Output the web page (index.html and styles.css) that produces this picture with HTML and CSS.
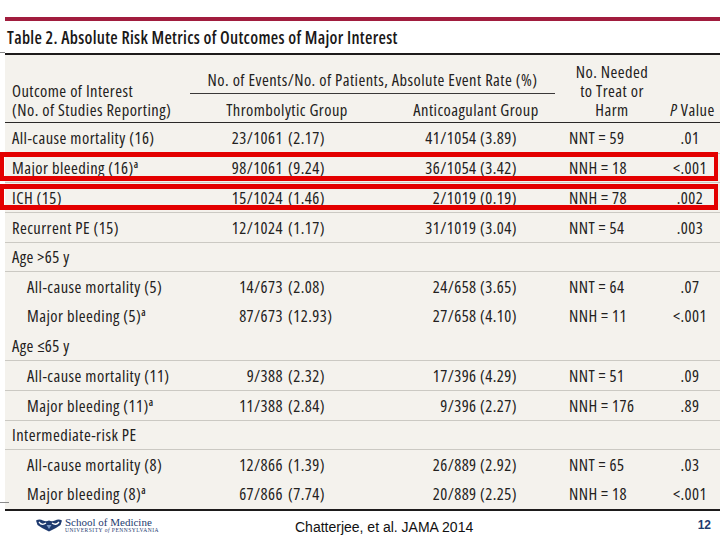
FILE: index.html
```html
<!DOCTYPE html>
<html lang="en">
<head>
<meta charset="utf-8">
<title>Table 2. Absolute Risk Metrics</title>
<link rel="stylesheet" href="styles.css">
</head>
<body>
<div class="slide">
  <div class="topbar"></div>
  <h1 class="title">Table 2. Absolute Risk Metrics of Outcomes of Major Interest</h1>
  <div class="table">
    <div class="thead">
      <div class="h-outcome">Outcome of Interest<br>(No. of Studies Reporting)</div>
      <div class="h-group">No. of Events/No. of Patients, Absolute Event Rate (%)</div>
      <div class="h-thromb">Thrombolytic Group</div>
      <div class="h-anti">Anticoagulant Group</div>
      <div class="h-nnt">No. Needed<br>to Treat or<br>Harm</div>
      <div class="h-p"><i>P</i> Value</div>
    </div>

    <div class="row">
      <div class="c-out">All-cause mortality (16)</div>
      <div class="c-thr"><span class="num">23/1061</span><span class="rate">(2.17)</span></div>
      <div class="c-ant">41/1054 (3.89)</div>
      <div class="c-nnt">NNT = 59</div>
      <div class="c-p">.01</div>
    </div>
    <div class="row ruled">
      <div class="c-out">Major bleeding (16)<sup>a</sup></div>
      <div class="c-thr"><span class="num">98/1061</span><span class="rate">(9.24)</span></div>
      <div class="c-ant">36/1054 (3.42)</div>
      <div class="c-nnt">NNH = 18</div>
      <div class="c-p">&lt;.001</div>
    </div>
    <div class="row ruled">
      <div class="c-out">ICH (15)</div>
      <div class="c-thr"><span class="num">15/1024</span><span class="rate">(1.46)</span></div>
      <div class="c-ant">2/1019 (0.19)</div>
      <div class="c-nnt">NNH = 78</div>
      <div class="c-p">.002</div>
    </div>
    <div class="row ruled">
      <div class="c-out">Recurrent PE (15)</div>
      <div class="c-thr"><span class="num">12/1024</span><span class="rate">(1.17)</span></div>
      <div class="c-ant">31/1019 (3.04)</div>
      <div class="c-nnt">NNT = 54</div>
      <div class="c-p">.003</div>
    </div>
    <div class="row ruled">
      <div class="c-out">Age &gt;65 y</div>
    </div>
    <div class="row ruled">
      <div class="c-out sub">All-cause mortality (5)</div>
      <div class="c-thr"><span class="num">14/673</span><span class="rate">(2.08)</span></div>
      <div class="c-ant">24/658 (3.65)</div>
      <div class="c-nnt">NNT = 64</div>
      <div class="c-p">.07</div>
    </div>
    <div class="row">
      <div class="c-out sub">Major bleeding (5)<sup>a</sup></div>
      <div class="c-thr"><span class="num">87/673</span><span class="rate">(12.93)</span></div>
      <div class="c-ant">27/658 (4.10)</div>
      <div class="c-nnt">NNH = 11</div>
      <div class="c-p">&lt;.001</div>
    </div>
    <div class="row">
      <div class="c-out">Age &le;65 y</div>
    </div>
    <div class="row ruled">
      <div class="c-out sub">All-cause mortality (11)</div>
      <div class="c-thr"><span class="num">9/388</span><span class="rate">(2.32)</span></div>
      <div class="c-ant">17/396 (4.29)</div>
      <div class="c-nnt">NNT = 51</div>
      <div class="c-p">.09</div>
    </div>
    <div class="row ruled">
      <div class="c-out sub">Major bleeding (11)<sup>a</sup></div>
      <div class="c-thr"><span class="num">11/388</span><span class="rate">(2.84)</span></div>
      <div class="c-ant">9/396 (2.27)</div>
      <div class="c-nnt">NNH = 176</div>
      <div class="c-p">.89</div>
    </div>
    <div class="row ruled">
      <div class="c-out">Intermediate-risk PE</div>
    </div>
    <div class="row ruled">
      <div class="c-out sub">All-cause mortality (8)</div>
      <div class="c-thr"><span class="num">12/866</span><span class="rate">(1.39)</span></div>
      <div class="c-ant">26/889 (2.92)</div>
      <div class="c-nnt">NNT = 65</div>
      <div class="c-p">.03</div>
    </div>
    <div class="row">
      <div class="c-out sub">Major bleeding (8)<sup>a</sup></div>
      <div class="c-thr"><span class="num">67/866</span><span class="rate">(7.74)</span></div>
      <div class="c-ant">20/889 (2.25)</div>
      <div class="c-nnt">NNH = 18</div>
      <div class="c-p">&lt;.001</div>
    </div>
  </div>

  <div class="highlight hl-1"></div>
  <div class="highlight hl-2"></div>
  <div class="tick tick-top"></div>
  <div class="tick tick-bottom"></div>

  <footer class="footer">
    <div class="logo">
      <svg class="shield" width="26" height="13" viewBox="0 0 26 13" aria-hidden="true">
        <path d="M0 1.5 Q3.5 -0.5 7 1.5 Q10 3 13 1.5 Q16 3 19 1.5 Q22.5 -0.5 26 1.5 L24.5 6 Q20 9.5 13 12.5 Q6 9.5 1.5 6 Z" fill="#1e3a6f"/>
        <path d="M3 3 Q6 7 10 4" stroke="#fff" stroke-width="1.3" fill="none"/>
        <path d="M16 4 Q20 7 23 3" stroke="#fff" stroke-width="1.3" fill="none"/>
        <path d="M10.5 6 L15.5 6 L13 10 Z" fill="#7f9cc8"/>
      </svg>
      <div class="logo-text">
        <div class="logo-school">School of Medicine</div>
        <div class="logo-univ">University <i>of</i> Pennsylvania</div>
      </div>
    </div>
    <div class="cite">Chatterjee, et al. JAMA 2014</div>
    <div class="page">12</div>
  </footer>
</div>
</body>
</html>
```

FILE: styles.css
```css
html, body {
  margin: 0;
  padding: 0;
  background: #ffffff;
}

.slide {
  position: relative;
  width: 720px;
  height: 540px;
  overflow: hidden;
  background: #ffffff;
  color: #232120;
  font-family: "Open Sans", "DejaVu Sans Condensed", sans-serif;
}

.topbar {
  margin: 17px 0 0 5px;
  height: 4px;
  background: #a11d3e;
}

.title {
  margin: 0 0 0 5px;
  padding-left: 2px;
  height: 32px;
  line-height: 33px;
  font-stretch: 75%;
  font-size: 17px;
  letter-spacing: 0.3px;
  font-weight: 600;
  color: #1a1818;
  border-bottom: 2px solid #1d1b1b;
  white-space: nowrap;
}

.table {
  margin-left: 5px;
  background: #f4f2ed;
  border-bottom: 2px solid #1d1b1b;
  font-size: 16.5px;
  font-stretch: 75%;
  letter-spacing: 0.45px;
}

.thead,
.row {
  display: grid;
  grid-template-columns: 185px 182px 183px 110px 1fr;
}

.thead {
  grid-template-rows: 1fr auto;
  height: 68px;
  box-sizing: border-box;
  padding-bottom: 3px;
  border-bottom: 1px solid #2a2828;
  line-height: 19px;
}

.h-outcome {
  grid-column: 1;
  grid-row: 1 / 3;
  align-self: end;
  padding-left: 7px;
  white-space: nowrap;
}

.h-group {
  grid-column: 2 / 4;
  grid-row: 1;
  align-self: end;
  text-align: center;
  padding-bottom: 4px;
  border-bottom: 1px solid #3a3838;
  white-space: nowrap;
}

.h-thromb {
  grid-column: 2;
  grid-row: 2;
  padding: 6px 0 0 12px;
  text-align: center;
  white-space: nowrap;
}

.h-anti {
  grid-column: 3;
  grid-row: 2;
  padding: 6px 0 0 25px;
  text-align: center;
  white-space: nowrap;
}

.h-nnt {
  grid-column: 4;
  grid-row: 1 / 3;
  align-self: end;
  text-align: center;
  padding-left: 4px;
}

.h-p {
  grid-column: 5;
  grid-row: 1 / 3;
  align-self: end;
  text-align: center;
  white-space: nowrap;
}

.row {
  height: 29.67px;
  box-sizing: border-box;
  align-items: center;
  white-space: nowrap;
}

.row.ruled {
  border-top: 1px solid #cbc9c3;
}

.c-out {
  grid-column: 1;
  padding-left: 7px;
}

.c-out.sub {
  padding-left: 22px;
}

.c-out sup {
  font-size: 10px;
  line-height: 0;
  vertical-align: 6px;
  font-weight: 600;
}

.c-thr {
  display: flex;
}

.c-thr .num {
  width: 93px;
  text-align: right;
}

.c-thr .rate {
  margin-left: 5px;
}

.c-ant {
  text-align: right;
  padding-right: 38px;
}

.c-nnt {
  padding-left: 14px;
}

.c-p {
  text-align: center;
  padding-right: 5px;
}

.highlight {
  position: absolute;
  left: 0;
  width: 718px;
  box-sizing: border-box;
  border: 5px solid #e30000;
  border-left-width: 4px;
  border-right-width: 4px;
}

.hl-1 {
  top: 152px;
  height: 29px;
}

.hl-2 {
  top: 184px;
  height: 26px;
}

.tick {
  position: absolute;
  left: 0;
  height: 1px;
  background: #8a8a8a;
}

.tick-top {
  top: 52px;
  width: 5px;
}

.tick-bottom {
  top: 502px;
  width: 9px;
}

.footer {
  display: flex;
  align-items: center;
  height: 29px;
  padding: 0 9px 0 36px;
}

.logo {
  display: flex;
  align-items: center;
  gap: 3px;
  width: 259px;
}

.shield {
  display: block;
}

.logo-text {
  color: #1e3a6f;
  font-family: "Liberation Serif", serif;
}

.logo-school {
  font-size: 11px;
  line-height: 10px;
}

.logo-univ {
  font-size: 5.5px;
  line-height: 7px;
  text-transform: uppercase;
  letter-spacing: 0.5px;
}

.logo-univ i {
  text-transform: none;
}

.cite {
  flex: 1;
  font-family: "Liberation Sans", Arial, sans-serif;
  font-size: 14px;
  color: #111111;
  padding-top: 3px;
}

.page {
  font-family: "Liberation Sans", Arial, sans-serif;
  font-size: 12px;
  font-weight: bold;
  color: #1e3a6f;
}
```
